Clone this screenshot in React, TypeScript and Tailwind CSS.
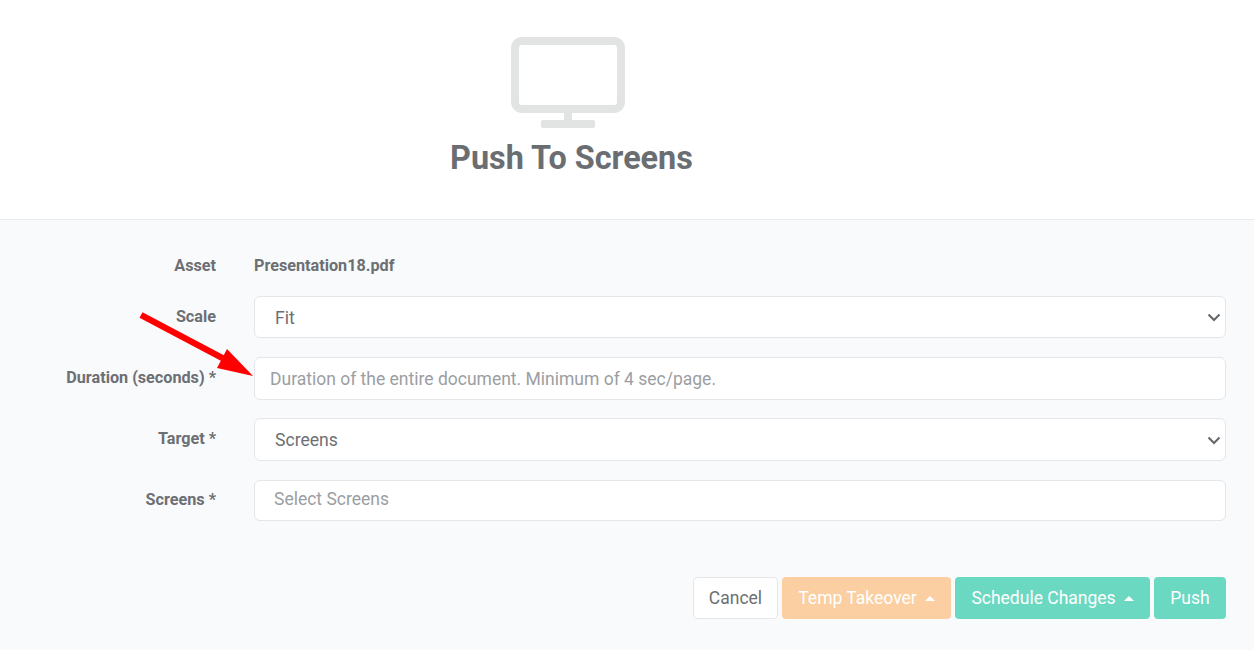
import React from "react";

const labelCls = "w-[216px] shrink-0 text-right text-[16.2px] font-bold text-[#6c6f73] leading-[20px]";
const fieldCls = "w-full bg-white border border-[#e4e6e9] rounded-[6px] text-[#6c6f73] outline-none";

function Caret() {
  return <span className="ml-[8px] inline-block w-0 h-0 border-x-[5px] border-x-transparent border-b-[5px] border-b-white" />;
}

function Select({ value, height }: { value: string; height: string }) {
  return (
    <div className="relative ml-[38px] w-[972px]">
      <select className={fieldCls + " appearance-none pl-[20px] pt-[2px] text-[17.6px] block " + height} defaultValue={value}>
        <option>{value}</option>
      </select>
      <svg className="absolute right-[4px] top-1/2 -translate-y-1/2 pointer-events-none" width="16" height="16" viewBox="0 0 16 16">
        <path d="M2.5 5.5 8 11l5.5-5.5" fill="none" stroke="#63666a" strokeWidth="2" />
      </svg>
    </div>
  );
}

export default function App() {
  return (
    <div className="relative w-[1254px] h-[650px] overflow-hidden bg-[#f9fafc] font-['Roboto',sans-serif]">
      <div className="h-[220px] bg-white border-b border-[#e9ebee] flex flex-col items-start w-full">
        <div className="w-[1143px] flex flex-col items-center pt-[37px]">
          <svg width="114" height="92" viewBox="0 0 114 92" className="mr-[8px]">
            <rect x="4" y="4" width="106" height="68" rx="7" fill="none" stroke="#e2e4e4" strokeWidth="8" />
            <rect x="53" y="76" width="8" height="8" fill="#e2e4e4" />
            <rect x="30" y="83" width="54" height="8" rx="2" fill="#e2e4e4" />
          </svg>
          <h1 className="mt-[8px] text-[32.4px] leading-[42px] font-bold text-[#6a6e72]">Push To Screens</h1>
        </div>
      </div>

      <div className="flex flex-col">
        <div className="flex items-center mt-[35px] h-[22px]">
          <div className={labelCls}>Asset</div>
          <div className="ml-[38px] text-[16.2px] font-bold text-[#6c6f73]">Presentation18.pdf</div>
        </div>
        <div className="flex mt-[19px]">
          <div className={labelCls + " pt-[11px]"}>Scale</div>
          <Select value="Fit" height="h-[42px]" />
        </div>
        <div className="flex mt-[19px]">
          <div className={labelCls + " pt-[11px]"}>Duration (seconds) *</div>
          <div className="ml-[38px] w-[972px]">
            <input
              className={fieldCls + " h-[43px] px-[15px] text-[17.5px] placeholder:text-[#9b9ea2]"}
              placeholder="Duration of the entire document. Minimum of 4 sec/page."
            />
          </div>
        </div>
        <div className="flex mt-[18px]">
          <div className={labelCls + " pt-[11px]"}>Target *</div>
          <Select value="Screens" height="h-[43px]" />
        </div>
        <div className="flex mt-[19px]">
          <div className={labelCls + " pt-[10px]"}>Screens *</div>
          <div className="ml-[38px] w-[972px]">
            <div className={fieldCls + " h-[41px] pl-[19px] pb-[2px] flex items-center text-[17.5px] text-[#9b9ea2]"}>Select Screens</div>
          </div>
        </div>
        <div className="flex justify-end gap-[4px] mt-[56px] pr-[28px] text-[17.5px] leading-[20px]">
          <button className="w-[85px] h-[42px] bg-white border border-[#e4e6ea] rounded-[4px] text-[#6c6f73]">Cancel</button>
          <button className="w-[169px] h-[42px] bg-[#fbcfa1] rounded-[4px] text-white flex items-center justify-center">
            Temp Takeover<Caret />
          </button>
          <button className="w-[195px] h-[42px] bg-[#6bd8c1] rounded-[4px] text-white flex items-center justify-center">
            Schedule Changes<Caret />
          </button>
          <button className="w-[72px] h-[42px] bg-[#6bd8c1] rounded-[4px] text-white">Push</button>
        </div>
      </div>

      <svg className="absolute left-0 top-0 pointer-events-none" width="1254" height="650">
        <line x1="141" y1="315" x2="228" y2="361" stroke="#ff0000" strokeWidth="6.5" />
        <polygon points="253,376 227,349 217,368" fill="#ff0000" />
      </svg>
    </div>
  );
}
